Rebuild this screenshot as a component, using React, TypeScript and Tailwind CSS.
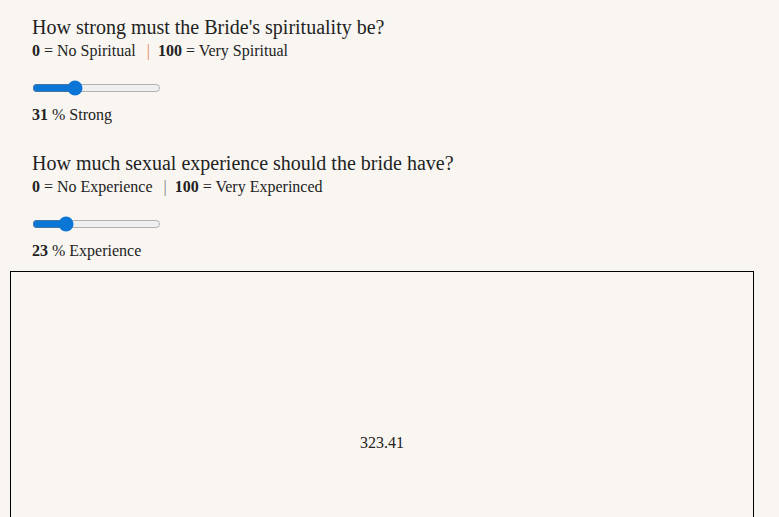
import React, { useState } from "react";

export default function App() {
  const [a, setA] = useState(31);
  const [b, setB] = useState(23);
  return (
    <div className="min-h-[517px] bg-[#f9f6f2] text-[#222] pt-[16px]" style={{ fontFamily: '"Liberation Serif", serif' }}>
      <div className="pl-[32px]">
        <div className="text-[20px] leading-[23px]">How strong must the Bride's spirituality be?</div>
        <div className="text-[16px] leading-[18px] mt-[3px]">
          <b>0</b> = No Spiritual <span className="text-[#e0875a] ml-[7px] mr-[4px]">|</span> <b>100</b> = Very Spiritual
        </div>
        <div className="mt-[18px] h-[20px] flex items-center">
          <input type="range" min={0} max={100} value={a} onChange={(e) => setA(+e.target.value)} className="m-0 w-[129px] accent-[#0b76d5]" />
        </div>
        <div className="text-[16px] leading-[18px] mt-[8px]"><b>31</b> % Strong</div>
        <div className="text-[20px] leading-[23px] mt-[28px]">How much sexual experience should the bride have?</div>
        <div className="text-[16px] leading-[18px] mt-[3px]">
          <b>0</b> = No Experience <span className="text-[#777] ml-[7px] mr-[4px]">|</span> <b>100</b> = Very Experinced
        </div>
        <div className="mt-[18px] h-[20px] flex items-center">
          <input type="range" min={0} max={100} value={b} onChange={(e) => setB(+e.target.value)} className="m-0 w-[129px] accent-[#0b76d5]" />
        </div>
        <div className="text-[16px] leading-[18px] mt-[8px]"><b>23</b> % Experience</div>
      </div>
      <div className="ml-[10px] mt-[11px] w-[744px] h-[344px] border border-black flex items-center justify-center text-[16px]">
        323.41
      </div>
    </div>
  );
}
